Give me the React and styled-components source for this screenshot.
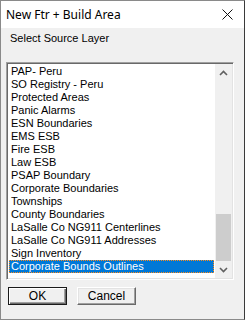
import React from "react";
import styled, { createGlobalStyle } from "styled-components";

const layers = [
  "PAP- Peru",
  "SO Registry - Peru",
  "Protected Areas",
  "Panic Alarms",
  "ESN Boundaries",
  "EMS ESB",
  "Fire ESB",
  "Law ESB",
  "PSAP Boundary",
  "Corporate Boundaries",
  "Townships",
  "County Boundaries",
  "LaSalle Co NG911 Centerlines",
  "LaSalle Co NG911 Addresses",
  "Sign Inventory",
  "Corporate Bounds Outlines",
];

const Global = createGlobalStyle`
  html, body {
    margin: 0;
    padding: 0;
    background: #f0f0f0;
  }
  * {
    box-sizing: border-box;
  }
`;

const Chevron = ({ up }) => (
  <svg width="9" height="6" viewBox="0 0 9 6">
    <path
      d={up ? "M1 5 L4.5 1.5 L8 5" : "M1 1 L4.5 4.5 L8 1"}
      fill="none"
      stroke="#606060"
      strokeWidth="1.6"
    />
  </svg>
);

const App = () => {
  const selected = layers.length - 1;
  return (
    <Window>
      <Global />
      <TitleBar>
        <Title>New Ftr + Build Area</Title>
        <Close>
          <svg width="11" height="11" viewBox="0 0 11 11">
            <path d="M0.5 0.5 L10.5 10.5 M10.5 0.5 L0.5 10.5" stroke="#111" strokeWidth="1" />
          </svg>
        </Close>
      </TitleBar>
      <Body>
        <Label>Select Source Layer</Label>
        <ListBox>
          <Items>
            {layers.map((name, i) => (
              <Item key={name} selected={i === selected}>
                {name}
              </Item>
            ))}
          </Items>
          <ScrollBar>
            <Arrow>
              <Chevron up />
            </Arrow>
            <Track>
              <Thumb />
            </Track>
            <Arrow>
              <Chevron />
            </Arrow>
          </ScrollBar>
        </ListBox>
        <Buttons>
          <Button primary>OK</Button>
          <Button>Cancel</Button>
        </Buttons>
      </Body>
    </Window>
  );
};

const Window = styled.div`
  width: 245px;
  height: 320px;
  display: flex;
  flex-direction: column;
  background: #f0f0f0;
  border: 1px solid #8a8a8a;
  border-right-color: #3a3a3a;
  overflow: hidden;
`;

const TitleBar = styled.div`
  height: 27px;
  flex: none;
  display: flex;
  align-items: center;
  justify-content: space-between;
  background: #ffffff;
  padding: 0 11px 0 5px;
`;

const Title = styled.div`
  font-family: "Noto Sans", sans-serif;
  font-size: 12px;
  color: #000;
  margin-top: -1px;
`;

const Close = styled.div`
  display: flex;
  margin-top: -1px;
`;

const Body = styled.div`
  flex: 1;
  display: flex;
  flex-direction: column;
  padding: 4px 0 0 5px;
  font-family: "Liberation Sans", Arial, sans-serif;
  font-size: 11px;
`;

const Label = styled.div`
  height: 13px;
  line-height: 13px;
  padding-left: 4px;
  color: #000;
`;

const ListBox = styled.div`
  margin-top: 17px;
  width: 228px;
  height: 218px;
  display: flex;
  background: #ffffff;
  border: 1px solid;
  border-color: #a0a0a0 #ffffff #ffffff #a0a0a0;
  box-shadow: inset 1px 1px 0 #696969, inset -1px -1px 0 #e3e3e3;
  padding: 1px;
`;

const Items = styled.div`
  flex: 1;
  display: flex;
  flex-direction: column;
  padding: 1px 1px 0 1px;
`;

const Item = styled.div`
  height: 13px;
  line-height: 13px;
  padding-left: 2px;
  white-space: nowrap;
  color: ${(p) => (p.selected ? "#ffffff" : "#000000")};
  background: ${(p) => (p.selected ? "#0078d7" : "transparent")};
  outline: ${(p) => (p.selected ? "1px dotted #ff8c1a" : "none")};
  outline-offset: -1px;
`;

const ScrollBar = styled.div`
  width: 17px;
  display: flex;
  flex-direction: column;
  background: #f0f0f0;
`;

const Arrow = styled.div`
  height: 17px;
  flex: none;
  display: flex;
  align-items: center;
  justify-content: center;
`;

const Track = styled.div`
  flex: 1;
  display: flex;
  flex-direction: column;
  justify-content: flex-end;
  padding: 0 1px;
`;

const Thumb = styled.div`
  height: 47px;
  background: #cdcdcd;
`;

const Buttons = styled.div`
  display: flex;
  gap: 10px;
  margin-top: 7px;
  padding-left: 2px;
`;

const Button = styled.button`
  width: 59px;
  height: 18px;
  padding: 0;
  font-family: "Liberation Sans", Arial, sans-serif;
  font-size: 12px;
  color: #000;
  background: #f0f0f0;
  border: 1px solid;
  border-color: ${(p) => (p.primary ? "#1a1a1a" : "#ffffff #696969 #696969 #ffffff")};
  box-shadow: ${(p) =>
    p.primary
      ? "inset 1px 1px 0 #ffffff, inset -1px -1px 0 #696969, inset -2px -2px 0 #a0a0a0"
      : "inset -1px -1px 0 #a0a0a0, inset 1px 1px 0 #e3e3e3"};
`;

export default App;
